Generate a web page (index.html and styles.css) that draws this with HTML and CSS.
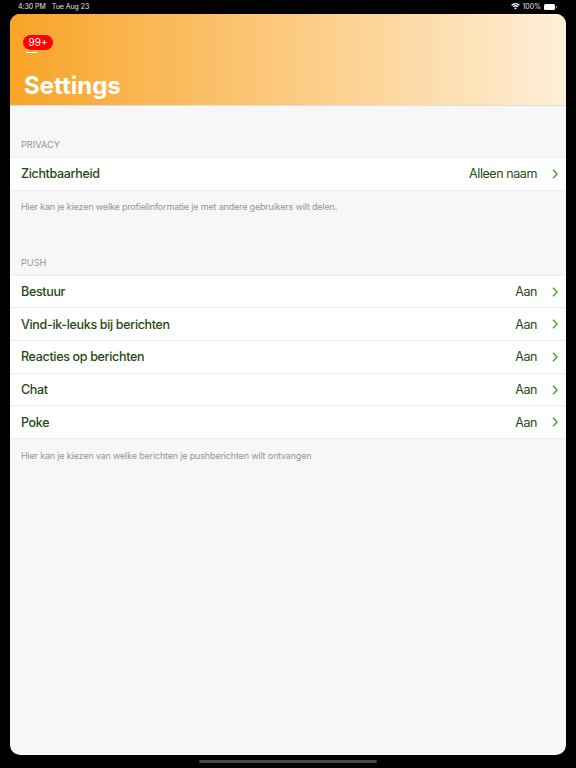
FILE: index.html
```html
<!DOCTYPE html>
<html lang="nl">
<head>
<meta charset="utf-8">
<title>Settings</title>
<link rel="stylesheet" href="styles.css">
</head>
<body>
<div class="statusbar">
  <div class="status-left"><span>4:30 PM</span><span>Tue Aug 23</span></div>
  <div class="status-right">
    <svg class="wifi" viewBox="0 0 16 12" width="9" height="7"><path d="M8 11.5 5.6 8.7a3.6 3.6 0 0 1 4.8 0zM4.4 7.4 2.9 5.7a7.6 7.6 0 0 1 10.2 0l-1.5 1.7a5.4 5.4 0 0 0-7.2 0zM1.8 4.5.3 2.8a11.6 11.6 0 0 1 15.4 0l-1.5 1.7a9.4 9.4 0 0 0-12.4 0z" fill="#fff"/></svg>
    <span>100%</span>
    <span class="battery"></span>
  </div>
</div>
<main class="sheet">
  <header class="hero">
    <div class="menu">
      <span class="menu-line menu-line-top"></span>
      <span class="menu-line menu-line-bottom"></span>
      <span class="badge">99+</span>
    </div>
    <h1 class="title">Settings</h1>
  </header>

  <section class="group group-first">
    <h2 class="group-label">PRIVACY</h2>
    <ul class="list">
      <li class="row"><span class="row-name">Zichtbaarheid</span><span class="row-value">Alleen naam</span><svg class="chevron" viewBox="0 0 6 10" width="6" height="10"><path d="M1 .8 5 5 1 9.2" fill="none" stroke="#4ea32f" stroke-width="1.5"/></svg></li>
    </ul>
    <p class="group-note">Hier kan je kiezen welke profielinformatie je met andere gebruikers wilt delen.</p>
  </section>

  <section class="group group-second">
    <h2 class="group-label">PUSH</h2>
    <ul class="list">
      <li class="row"><span class="row-name">Bestuur</span><span class="row-value">Aan</span><svg class="chevron" viewBox="0 0 6 10" width="6" height="10"><path d="M1 .8 5 5 1 9.2" fill="none" stroke="#4ea32f" stroke-width="1.5"/></svg></li>
      <li class="row"><span class="row-name">Vind-ik-leuks bij berichten</span><span class="row-value">Aan</span><svg class="chevron" viewBox="0 0 6 10" width="6" height="10"><path d="M1 .8 5 5 1 9.2" fill="none" stroke="#4ea32f" stroke-width="1.5"/></svg></li>
      <li class="row"><span class="row-name">Reacties op berichten</span><span class="row-value">Aan</span><svg class="chevron" viewBox="0 0 6 10" width="6" height="10"><path d="M1 .8 5 5 1 9.2" fill="none" stroke="#4ea32f" stroke-width="1.5"/></svg></li>
      <li class="row"><span class="row-name">Chat</span><span class="row-value">Aan</span><svg class="chevron" viewBox="0 0 6 10" width="6" height="10"><path d="M1 .8 5 5 1 9.2" fill="none" stroke="#4ea32f" stroke-width="1.5"/></svg></li>
      <li class="row"><span class="row-name">Poke</span><span class="row-value">Aan</span><svg class="chevron" viewBox="0 0 6 10" width="6" height="10"><path d="M1 .8 5 5 1 9.2" fill="none" stroke="#4ea32f" stroke-width="1.5"/></svg></li>
    </ul>
    <p class="group-note">Hier kan je kiezen van welke berichten je pushberichten wilt ontvangen</p>
  </section>
</main>
<div class="home-bar"></div>
</body>
</html>
```
FILE: styles.css
```css
* { box-sizing: border-box; }
html, body { margin: 0; height: 100%; }
body {
  background: #000;
  font-family: Inter, "Liberation Sans", sans-serif;
  width: 576px;
  height: 768px;
  overflow: hidden;
  display: flex;
  flex-direction: column;
}
.statusbar {
  height: 14px;
  padding: 0 19px 1px 18px;
  display: flex;
  align-items: center;
  justify-content: space-between;
  color: #e6e6e6;
  font-size: 7px;
  line-height: 13px;
}
.status-left { display: flex; gap: 6px; letter-spacing: -0.05px; }
.status-right { display: flex; align-items: center; gap: 2px; }
.battery {
  width: 11px;
  height: 6px;
  margin-left: 1px;
  margin-right: 2px;
  border-radius: 1.5px;
  background: #fff;
  display: block;
  position: relative;
}
.battery::after {
  content: "";
  position: absolute;
  left: 12px;
  top: 2px;
  width: 1px;
  height: 2px;
  background: #8a8a8a;
}
.sheet {
  margin: 0 10px;
  width: 556px;
  height: 741px;
  background: #f7f7f7;
  border-radius: 10px;
  overflow: hidden;
}
.hero {
  height: 92px;
  background: linear-gradient(90deg, #f8a427 0%, #ffefd8 100%);
  border-bottom: 1px solid #dedede;
  padding: 21px 14px 0;
}
.menu { position: relative; height: 17px; }
.badge {
  position: absolute;
  left: -1px;
  top: 0;
  width: 30px;
  height: 14.5px;
  border-radius: 8px;
  background: #ff0000;
  color: #fff;
  font-size: 10px;
  line-height: 14.5px;
  text-align: center;
}
.menu-line {
  position: absolute;
  left: 2px;
  width: 11px;
  height: 1px;
  background: #fff;
}
.menu-line-top { top: 14px; }
.menu-line-bottom { top: 17px; }
.title {
  margin: 19px 0 0;
  color: #fff;
  font-size: 24px;
  line-height: 30px;
  font-weight: 700;
}
.group-first { padding-top: 31px; }
.group-second { padding-top: 34px; }
.group-label {
  margin: 0;
  padding: 0 11px;
  height: 20px;
  color: #8c9c88;
  font-size: 9.2px;
  line-height: 16px;
  font-weight: 400;
}
.list {
  list-style: none;
  margin: 0;
  padding: 0;
  background: #fff;
  border-top: 1px solid #eee;
}
.row {
  height: 32.7px;
  padding: 0 8px 0 11px;
  border-bottom: 1px solid #eee;
  display: flex;
  align-items: center;
  font-size: 12.5px;
  letter-spacing: -0.33px;
  color: #1f4a12;
}
.row-name { flex: 1; font-weight: 500; }
.row-value { margin-right: 15px; font-weight: 400; letter-spacing: -0.42px; }
.chevron { flex: none; }
.group-note {
  margin: 0;
  padding: 9.5px 11px 0;
  height: 30px;
  color: #8c9c88;
  font-size: 9px;
  letter-spacing: -0.17px;
  line-height: 14px;
}
.home-bar {
  width: 178px;
  height: 3px;
  margin: 5px auto 0;
  border-radius: 2px;
  background: #4a4a4a;
}
```
